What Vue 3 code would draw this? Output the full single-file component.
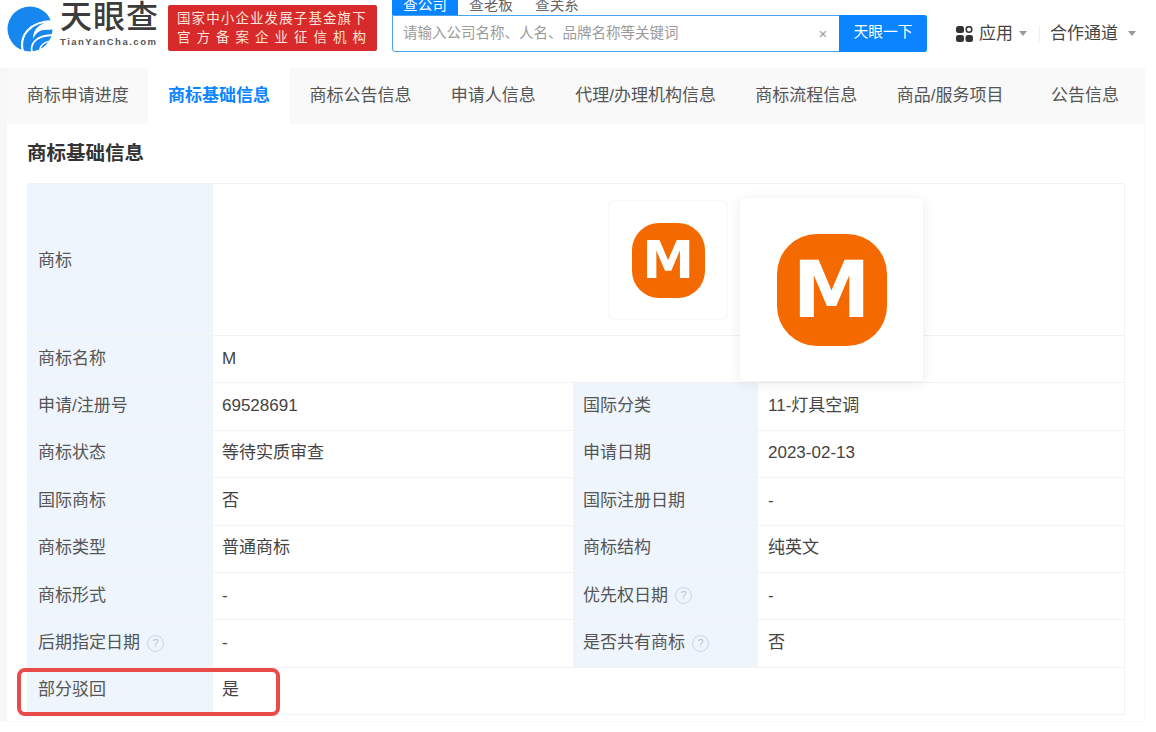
<template>
  <div class="page">
    <header class="topbar">
      <svg class="logo-mark" viewBox="0 0 46 46" width="46" height="46">
        <circle cx="23" cy="23" r="22.5" fill="#1587ee" />
        <path fill="none" stroke="#fff" stroke-width="2.2" d="M16 46C12 31 21 15 47 15" />
        <path fill="#fff" d="M47 15C34 16 26 22 26 33c3-7 9-10 15-9l6-1z" />
        <path fill="none" stroke="#fff" stroke-width="1.8" d="M25 46C23 37 30 29 47 29" />
        <path fill="none" stroke="#fff" stroke-width="1.4" d="M33 46C32 40 37 35 47 35" />
      </svg>
      <div class="logo-text">
        <div class="logo-cn">天眼查</div>
        <div class="logo-en">TianYanCha.com</div>
      </div>
      <div class="badge">
        <div class="badge-top">国家中小企业发展子基金旗下</div>
        <div class="badge-bottom">官方备案企业征信机构</div>
      </div>
      <div class="search">
        <div class="search-tabs">
          <span class="search-tab active">查公司</span>
          <span class="search-tab">查老板</span>
          <span class="search-tab">查关系</span>
        </div>
        <div class="search-box">
          <span class="search-hint">请输入公司名称、人名、品牌名称等关键词</span>
          <span class="search-clear">×</span>
          <span class="search-btn">天眼一下</span>
        </div>
      </div>
      <div class="top-links">
        <svg viewBox="0 0 17 16" width="17" height="16">
          <rect x="0" y="0" width="8" height="7" rx="2.5" fill="#333" />
          <circle cx="13" cy="3.5" r="2.8" fill="none" stroke="#333" stroke-width="1.5" />
          <rect x="0" y="9" width="8" height="7" rx="2.5" fill="#333" />
          <rect x="9.5" y="9" width="7.5" height="7" rx="2.5" fill="#333" />
        </svg>
        <span class="top-link">应用</span>
        <i class="caret"></i>
        <span class="divider"></span>
        <span class="top-link">合作通道</span>
        <i class="caret last"></i>
      </div>
    </header>

    <div class="panel">
      <nav class="tabs">
        <span v-for="tab in tabs" :key="tab" class="tab" :class="{ current: tab === '商标基础信息' }">{{ tab }}</span>
      </nav>
      <div class="content">
        <h3 class="title">商标基础信息</h3>
        <div class="info">
          <div class="row logo-row">
            <div class="label">商标</div>
            <div class="value logo-cell">
              <div class="thumb">
                <div class="m-logo small">M</div>
              </div>
            </div>
          </div>
          <div class="row single">
            <div class="label">商标名称</div>
            <div class="value">M</div>
          </div>
          <div class="row" v-for="row in rows" :key="row[0]">
            <div class="label">{{ row[0] }}<i v-if="row[0] === '后期指定日期'" class="help">?</i></div>
            <div class="value half">{{ row[1] }}</div>
            <div class="label">{{ row[2] }}<i v-if="helpLabels.includes(row[2])" class="help">?</i></div>
            <div class="value">{{ row[3] }}</div>
          </div>
          <div class="row single last-row">
            <div class="label">部分驳回</div>
            <div class="value">是</div>
          </div>
          <div class="preview">
            <div class="m-logo big">M</div>
          </div>
          <div class="highlight"></div>
        </div>
      </div>
    </div>
  </div>
</template>

<script setup>
const tabs = ['商标申请进度', '商标基础信息', '商标公告信息', '申请人信息', '代理/办理机构信息', '商标流程信息', '商品/服务项目', '公告信息']
const helpLabels = ['优先权日期', '是否共有商标']
const rows = [
  ['申请/注册号', '69528691', '国际分类', '11-灯具空调'],
  ['商标状态', '等待实质审查', '申请日期', '2023-02-13'],
  ['国际商标', '否', '国际注册日期', '-'],
  ['商标类型', '普通商标', '商标结构', '纯英文'],
  ['商标形式', '-', '优先权日期', '-'],
  ['后期指定日期', '-', '是否共有商标', '否']
]
</script>

<style>
html, body {
  background: #fff;
  overflow: hidden;
}
</style>

<style scoped>
.page {
  width: 1156px;
  height: 732px;
  overflow: hidden;
  font-family: "Liberation Sans", "Noto Sans CJK SC", sans-serif;
  color: #333;
  font-size: 16px;
}
.topbar {
  height: 68px;
  display: flex;
  align-items: flex-start;
  box-sizing: border-box;
  padding-left: 7px;
}
.logo-mark {
  margin-top: 6px;
}
.logo-text {
  margin-left: 7px;
  width: 99px;
}
.logo-cn {
  font-size: 32px;
  line-height: 32px;
  font-weight: 500;
  color: #3c3c3c;
  letter-spacing: 1px;
  margin-top: 1px;
}
.logo-en {
  font-size: 9.5px;
  font-weight: bold;
  color: #555;
  letter-spacing: 1.5px;
  line-height: 12px;
  margin-top: 3px;
  white-space: nowrap;
}
.badge {
  margin: 5px 0 0 9px;
  width: 209px;
  height: 46px;
  background: #d8292b;
  border-radius: 2px;
  color: #fbe4d8;
  box-sizing: border-box;
  padding: 4px 9px;
  font-size: 13.5px;
  line-height: 19px;
}
.badge-top {
  white-space: nowrap;
  letter-spacing: 1.1px;
}
.badge-bottom {
  letter-spacing: 6px;
  white-space: nowrap;
}
.search {
  margin-left: 15px;
  width: 535px;
}
.search-tabs {
  height: 15px;
  display: flex;
  font-size: 14.67px;
  line-height: 10px;
  color: #666;
}
.search-tab {
  padding: 0 11px;
  height: 15px;
  overflow: hidden;
}
.search-tab.active {
  background: #0a84ff;
  color: #fff;
}
.search-box {
  height: 37px;
  box-sizing: border-box;
  border: 1px solid #4aa3f5;
  border-radius: 0 3px 3px 3px;
  display: flex;
  align-items: center;
  font-size: 14.5px;
  line-height: 31px;
  color: #9a9a9a;
}
.search-hint {
  flex: 1;
  padding-left: 10px;
}
.search-clear {
  width: 24px;
  margin-right: 5px;
  text-align: center;
  font-size: 15px;
}
.search-btn {
  width: 88px;
  height: 37px;
  margin: -1px;
  background: #0a84ff;
  color: #fff;
  line-height: 35px;
  text-align: center;
  border-radius: 0 3px 3px 0;
  font-size: 14.75px;
}
.top-links {
  display: flex;
  align-items: center;
  height: 37px;
  margin-top: 15px;
  margin-left: 29px;
  font-size: 17px;
  line-height: 33px;
  color: #444;
}
.top-link {
  margin-left: 6px;
  white-space: nowrap;
}
.caret {
  width: 0;
  height: 0;
  border: 4px solid transparent;
  border-top: 5px solid #999;
  border-bottom: 0;
  margin-left: 6px;
}
.caret.last {
  margin-left: 10px;
}
.divider {
  width: 1px;
  height: 16px;
  background: #eee;
  margin: 0 4px 0 12px;
}
.panel {
  width: 1145px;
  height: 654px;
  box-sizing: border-box;
  border-left: 7px solid #f7f7f7;
  border-right: 1px solid #f8f8f8;
  border-bottom: 1px solid #f8f8f8;
}
.tabs {
  height: 56px;
  display: flex;
  background: #f9f9f9;
}
.tab {
  font-size: 17px;
  line-height: 55px;
  color: #555;
  padding: 0 19.7px;
  white-space: nowrap;
}
.tab:last-child {
  padding-left: 28px;
}
.tab.current {
  background: #fff;
  color: #0a84ff;
  font-weight: bold;
}
.content {
  padding: 0 20px;
}
.title {
  margin: 0;
  font-size: 19.5px;
  line-height: 59px;
  color: #333;
  font-weight: bold;
}
.info {
  position: relative;
  border: 1px solid #f2f2f2;
  width: 1098px;
  box-sizing: border-box;
}
.row {
  display: flex;
  height: 47.4px;
  border-bottom: 1px solid #f2f2f2;
  box-sizing: border-box;
}
.logo-row {
  height: 152px;
}
.last-row {
  border-bottom: 0;
  height: 46px;
}
.label {
  width: 185px;
  flex: none;
  background: #eef5fd;
  color: #555;
  font-size: 17px;
  line-height: 20px;
  padding: 0 0 1px 10px;
  box-sizing: border-box;
  display: flex;
  align-items: center;
  white-space: nowrap;
}
.logo-row .label {
  padding-top: 3px;
}
.value {
  flex: 1;
  padding: 0 0 1px 10px;
  display: flex;
  align-items: center;
  font-size: 17px;
  line-height: 20px;
  color: #444;
}
.value.half {
  flex: none;
  width: 360px;
  padding-left: 9px;
  box-sizing: border-box;
}
.single .value {
  padding-left: 9px;
}
.logo-cell {
  position: relative;
}
.thumb {
  position: absolute;
  left: 395px;
  top: 16px;
  width: 120px;
  height: 120px;
  box-sizing: border-box;
  border: 1px solid #f8f8f8;
  border-radius: 5px;
  display: flex;
  align-items: center;
  justify-content: center;
}
.m-logo {
  background: #f56a00;
  color: #fff;
  font-weight: bold;
  display: flex;
  align-items: center;
  justify-content: center;
  font-family: "DejaVu Sans", sans-serif;
}
.m-logo.small {
  width: 73px;
  height: 75px;
  border-radius: 27px;
  font-size: 52px;
}
.m-logo.big {
  width: 110px;
  height: 112px;
  border-radius: 40px;
  font-size: 78px;
}
.preview {
  position: absolute;
  left: 712px;
  top: 14px;
  width: 183px;
  height: 183px;
  background: #fff;
  border-radius: 4px;
  box-shadow: 0 2px 14px rgba(0, 0, 0, 0.08);
  display: flex;
  align-items: center;
  justify-content: center;
}
.help {
  width: 17px;
  height: 17px;
  box-sizing: border-box;
  border: 1px solid #c6d6e4;
  border-radius: 50%;
  margin-left: 7px;
  font-size: 11px;
  font-style: normal;
  color: #b3c4d4;
  text-align: center;
  line-height: 15px;
}
.highlight {
  position: absolute;
  left: -11px;
  bottom: -2px;
  width: 263px;
  height: 48px;
  box-sizing: border-box;
  border: 4px solid #e94b4b;
  border-radius: 8px;
}
</style>
